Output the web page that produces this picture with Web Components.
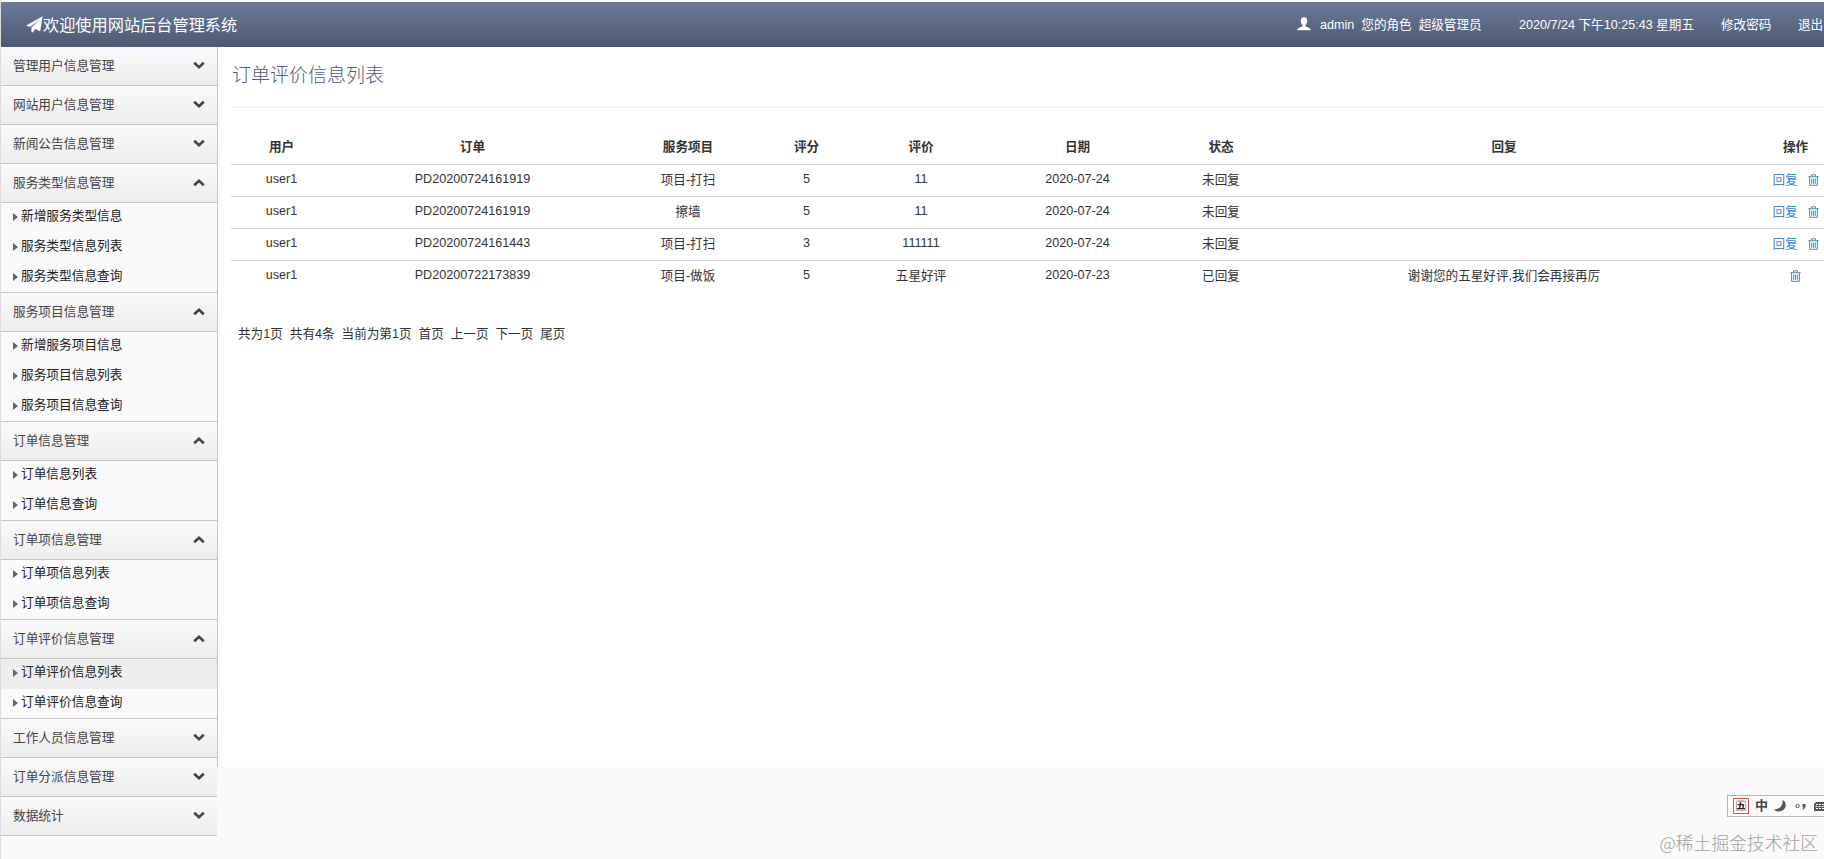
<!DOCTYPE html>
<html lang="zh-CN">
<head>
<meta charset="UTF-8">
<title>网站后台管理系统</title>
<style>
    body {
        margin: 0;
        background-color: #fafafa;
        color: #333;
        font-family: "Liberation Sans", "Noto Sans CJK SC", sans-serif;
        font-size: 12.6px;
        overflow: hidden;
    }
</style>
</head>
<body>
<admin-layout>
    <admin-navbar slot="top" brand="欢迎使用网站后台管理系统"></admin-navbar>
    <side-menu slot="side">
        <menu-group label="管理用户信息管理"></menu-group>
        <menu-group label="网站用户信息管理"></menu-group>
        <menu-group label="新闻公告信息管理"></menu-group>
        <menu-group label="服务类型信息管理" open>
            <menu-link>新增服务类型信息</menu-link>
            <menu-link>服务类型信息列表</menu-link>
            <menu-link>服务类型信息查询</menu-link>
        </menu-group>
        <menu-group label="服务项目信息管理" open>
            <menu-link>新增服务项目信息</menu-link>
            <menu-link>服务项目信息列表</menu-link>
            <menu-link>服务项目信息查询</menu-link>
        </menu-group>
        <menu-group label="订单信息管理" open>
            <menu-link>订单信息列表</menu-link>
            <menu-link>订单信息查询</menu-link>
        </menu-group>
        <menu-group label="订单项信息管理" open>
            <menu-link>订单项信息列表</menu-link>
            <menu-link>订单项信息查询</menu-link>
        </menu-group>
        <menu-group label="订单评价信息管理" open>
            <menu-link active>订单评价信息列表</menu-link>
            <menu-link>订单评价信息查询</menu-link>
        </menu-group>
        <menu-group label="工作人员信息管理"></menu-group>
        <menu-group label="订单分派信息管理"></menu-group>
        <menu-group label="数据统计"></menu-group>
    </side-menu>
    <content-panel heading="订单评价信息列表">
        <review-table></review-table>
        <page-bar></page-bar>
    </content-panel>
</admin-layout>
<ime-bar></ime-bar>
<corner-mark>@稀土掘金技术社区</corner-mark>

<script>
class BaseElement extends HTMLElement {
    constructor() {
        super();
        this.attachShadow({ mode: 'open' });
    }

    connectedCallback() {
        this.shadowRoot.innerHTML = this.render();
    }
}

class AdminLayout extends BaseElement {
    render() {
        return `
            <style>
                :host {
                    display: flex;
                    flex-direction: column;
                    box-sizing: border-box;
                    height: 859px;
                    padding-top: 2px;
                    border-left: 1px solid #dcdcdc;
                }
                .body {
                    display: flex;
                    align-items: flex-start;
                }
            </style>
            <slot name="top"></slot>
            <div class="body">
                <slot name="side"></slot>
                <slot></slot>
            </div>
        `;
    }
}

class AdminNavbar extends BaseElement {
    render() {
        return `
            <style>
                :host {
                    display: flex;
                    flex: none;
                    align-items: center;
                    height: 45px;
                    box-sizing: border-box;
                    padding: 0 0 2px 25px;
                    color: #fff;
                    white-space: pre;
                    overflow: hidden;
                    background: linear-gradient(#6b7a9c, #4d5971);
                }
                .brand {
                    display: flex;
                    align-items: center;
                    flex: 1;
                    padding-top: 1px;
                    font-size: 16.2px;
                }
                .user {
                    display: flex;
                    align-items: center;
                    gap: 9px;
                    width: 222px;
                }
                .time { width: 202px; }
                .pass { width: 77px; }
                .exit { width: 26px; }
                svg { display: block; flex: none; }
            </style>
            <div class="brand">
                <svg width="17" height="17" viewBox="0 0 17 17"><path fill="#fff" d="M16.6.2 14.2 15.2 9.2 13 6.7 16.6 5.4 16V11.6L14.2 3.2 4 11 .2 9.4z"/></svg>
                <span>${this.getAttribute('brand')}</span>
            </div>
            <div class="user">
                <svg width="14" height="14" viewBox="0 0 14 14"><path fill="#fff" d="M7 .3C4.8.3 3.7 1.8 3.8 4c.1 1.8.8 3.3 1.7 4.2v1.3C3.6 10.3.3 11.1.2 13.2h13.6c-.1-2.1-3.4-2.9-5.3-3.7V8.2C9.4 7.3 10.100 5.8 10.200 4 10.300 1.8 9.200.3 7 .3z"/></svg>
                <span>admin  您的角色  超级管理员</span>
            </div>
            <span class="time">2020/7/24 下午10:25:43 星期五</span>
            <span class="pass">修改密码</span>
            <span class="exit">退出</span>
        `;
    }
}

class SideMenu extends BaseElement {
    render() {
        return `
            <style>
                :host {
                    display: block;
                    flex: none;
                    width: 216px;
                    font-size: 12.7px;
                }
            </style>
            <slot></slot>
        `;
    }
}

class MenuGroup extends BaseElement {
    render() {
        const arrow = this.hasAttribute('open') ? 'M1.2 7.3 6 2.7l4.8 4.6' : 'M1.2 1.7 6 6.3l4.8-4.6';
        return `
            <style>
                :host { display: block; }
                .head {
                    display: flex;
                    align-items: center;
                    justify-content: space-between;
                    height: 39px;
                    box-sizing: border-box;
                    padding: 0 12px 2px 12px;
                    border-bottom: 1px solid #c4c4c4;
                    background: linear-gradient(#fafafa, #ededed);
                    color: #444;
                }
                .head span { padding-bottom: 2px; }
                .links {
                    background-color: #fafafa;
                    box-shadow: inset 0 -1px #c4c4c4;
                }
            </style>
            <div class="head">
                <span>${this.getAttribute('label')}</span>
                <svg width="12" height="9" viewBox="0 0 12 9"><path d="${arrow}" fill="none" stroke="#444" stroke-width="2.6"/></svg>
            </div>
            <div class="links"><slot></slot></div>
        `;
    }
}

class MenuLink extends BaseElement {
    render() {
        return `
            <style>
                :host {
                    display: flex;
                    align-items: center;
                    gap: 3px;
                    height: 30px;
                    box-sizing: border-box;
                    padding: 0 0 3px 12px;
                    color: #222;
                }
                :host([active]) { background-color: #eee; }
                i {
                    border: 4px solid transparent;
                    border-left: 5px solid #566a7c;
                    border-right: 0;
                }
                span { padding-bottom: 4px; }
            </style>
            <i></i><span><slot></slot></span>
        `;
    }
}

class ContentPanel extends BaseElement {
    render() {
        return `
            <style>
                :host {
                    display: block;
                    flex: 1;
                    min-width: 0;
                    height: 720px;
                    box-sizing: border-box;
                    padding-left: 13px;
                    border-left: 1px solid #c4c4c4;
                    background-color: #fff;
                    overflow: hidden;
                }
                h1 {
                    height: 61px;
                    box-sizing: border-box;
                    margin: 0 0 23px 1px;
                    padding-top: 15px;
                    border-bottom: 1px solid #eee;
                    color: #4f5b7a;
                    font-size: 19px;
                    font-weight: 300;
                    line-height: 28px;
                }
            </style>
            <h1>${this.getAttribute('heading')}</h1>
            <slot></slot>
        `;
    }
}

class ReviewTable extends BaseElement {
    getRows() {
        return [
            ['user1', 'PD20200724161919', '项目-打扫', '5', '11', '2020-07-24', '未回复', ''],
            ['user1', 'PD20200724161919', '擦墙', '5', '11', '2020-07-24', '未回复', ''],
            ['user1', 'PD20200724161443', '项目-打扫', '3', '111111', '2020-07-24', '未回复', ''],
            ['user1', 'PD20200722173839', '项目-做饭', '5', '五星好评', '2020-07-23', '已回复', '谢谢您的五星好评,我们会再接再厉'],
        ];
    }

    render() {
        const titles = ['用户', '订单', '服务项目', '评分', '评价', '日期', '状态', '回复', '操作'];
        const widths = [101, 281, 150, 87, 142, 171, 116, 450, 133];
        const trash = `<svg width="11" height="12" viewBox="0 0 11 12" fill="none" stroke="#428bca"><path d="M.3 2.7h10.4M3.5 2.5V.8h4v1.7M1.6 3v8.3h7.8V3M3.7 4.5v5.3M5.5 4.5v5.3M7.3 4.5v5.3"/></svg>`;
        return `
            <style>
                :host { display: block; }
                table {
                    width: 1631px;
                    table-layout: fixed;
                    border-collapse: collapse;
                }
                th, td {
                    padding: 0 0 3px;
                    box-sizing: border-box;
                    text-align: center;
                    white-space: nowrap;
                }
                th { height: 33px; font-weight: bold; }
                td { height: 32px; border-top: 1px solid #d8d8d8; }
                .ops {
                    display: flex;
                    align-items: center;
                    justify-content: center;
                    gap: 10px;
                }
                .ops svg { margin-top: 2px; }
                a { color: #428bca; }
            </style>
            <table>
                <colgroup>${widths.map(w => `<col style="width: ${w}px">`).join('')}</colgroup>
                <tr>${titles.map(t => `<th>${t}</th>`).join('')}</tr>
                ${this.getRows().map(row => `
                    <tr>
                        ${row.map(cell => `<td>${cell}</td>`).join('')}
                        <td><div class="ops">${row[6] === '未回复' ? '<a>回复</a>' : ''}${trash}</div></td>
                    </tr>
                `).join('')}
            </table>
        `;
    }
}

class PageBar extends BaseElement {
    render() {
        return `
            <style>
                :host {
                    display: block;
                    margin-top: 32px;
                    padding-left: 7px;
                    line-height: 20px;
                }
                span { white-space: pre; }
            </style>
            <span>共为1页  共有4条  当前为第1页  首页  上一页  下一页  尾页</span>
        `;
    }
}

// floating input method toolbar, runs off the right edge
class ImeBar extends BaseElement {
    render() {
        return `
            <style>
                :host {
                    position: absolute;
                    right: 0;
                    top: 795px;
                    display: flex;
                    align-items: center;
                    width: 97px;
                    height: 22px;
                    box-sizing: border-box;
                    padding: 0 0 1px 5px;
                    border: 1px solid #b4b4b4;
                    border-right: 0;
                    background-color: #fcfcfc;
                    color: #444;
                    overflow: hidden;
                }
                .wubi {
                    flex: none;
                    width: 16px;
                    height: 16px;
                    box-sizing: border-box;
                    border: 1px solid #cf5a50;
                    outline: 1px solid #e2a39c;
                    outline-offset: -4px;
                    text-align: center;
                    color: #222;
                    font-size: 10px;
                    font-weight: bold;
                    line-height: 14px;
                }
                .lang {
                    margin: 0 5px 0 6px;
                    padding-bottom: 3px;
                    font-size: 13px;
                    font-weight: bold;
                }
                svg { flex: none; }
            </style>
            <span class="wubi">五</span>
            <span class="lang">中</span>
            <svg width="60" height="16" viewBox="0 0 60 16" fill="#555">
                <path d="M9.500 2c3.500 1.500 4.200 6 1.800 9-2.500 3-7.800 3.300-10.300.4C7 11.500 10.300 7.500 9.500 2z"/>
                <circle cx="24.500" cy="8" r="1.700" fill="none" stroke="#555"/>
                <path d="M29.500 6h3v3l-2 2.500h-1l1-2.500h-1z"/>
                <path d="M43 4h14v9H41V6z"/>
                <path d="M43 6.500h14M42.500 8.500h14M43 10.500h14" stroke="#fff" stroke-dasharray="2 1"/>
            </svg>
        `;
    }
}

class CornerMark extends BaseElement {
    render() {
        return `
            <style>
                :host {
                    position: absolute;
                    right: 6px;
                    top: 829px;
                    color: #a0a0a0;
                    font-family: "Noto Sans CJK SC", sans-serif;
                    font-size: 17.8px;
                    font-weight: 300;
                    line-height: 26px;
                    white-space: nowrap;
                }
            </style>
            <slot></slot>
        `;
    }
}

customElements.define('admin-layout', AdminLayout);
customElements.define('admin-navbar', AdminNavbar);
customElements.define('side-menu', SideMenu);
customElements.define('menu-group', MenuGroup);
customElements.define('menu-link', MenuLink);
customElements.define('content-panel', ContentPanel);
customElements.define('review-table', ReviewTable);
customElements.define('page-bar', PageBar);
customElements.define('ime-bar', ImeBar);
customElements.define('corner-mark', CornerMark);
</script>
</body>
</html>
